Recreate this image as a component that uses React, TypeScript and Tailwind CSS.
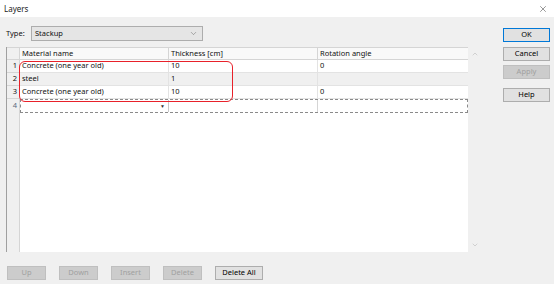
import { ChevronDown, ChevronUp, X } from "lucide-react";

const rows = [
  { n: "1", material: "Concrete (one year old)", thickness: "10", rotation: "0", alt: false },
  { n: "2", material: "steel", thickness: "1", rotation: "", alt: true },
  { n: "3", material: "Concrete (one year old)", thickness: "10", rotation: "0", alt: false },
];

function SideButton({ label, primary, disabled }: { label: string; primary?: boolean; disabled?: boolean }) {
  return (
    <button
      type="button"
      className={
        "h-[14px] w-[47px] border text-[7.5px] leading-none " +
        (disabled
          ? "border-[#bfbfbf] bg-[#cccccc] text-[#a0a0a0]"
          : primary
            ? "border-[#0078d7] bg-[#e1e1e1] text-black"
            : "border-[#adadad] bg-[#e1e1e1] text-black")
      }
    >
      {label}
    </button>
  );
}

function BottomButton({ label, disabled, w = "w-[39px]" }: { label: string; disabled?: boolean; w?: string }) {
  return (
    <button
      type="button"
      className={
        "h-[14px] border text-[7.5px] leading-none " +
        w +
        " " +
        (disabled ? "border-[#bfbfbf] bg-[#cccccc] text-[#a0a0a0]" : "border-[#adadad] bg-[#e1e1e1] text-black")
      }
    >
      {label}
    </button>
  );
}

export default function App() {
  return (
    <div
      className="flex h-[284px] w-[554px] flex-col bg-[#f0f0f0] text-[7.5px] text-[#111]"
      style={{ fontFamily: '"Noto Sans", "Open Sans", sans-serif' }}
    >
      <div className="flex h-[17px] items-center justify-between bg-white pl-[4px] pr-[6px]">
        <span className="text-[8px] text-[#222]">Layers</span>
        <X size={10} strokeWidth={1.2} className="text-[#333]" />
      </div>

      <div className="flex flex-1">
        <div className="flex flex-col pl-[6px]">
          <div className="mt-[9px] flex h-[15px] items-center">
            <span className="w-[25px]">Type:</span>
            <div className="flex h-[15px] w-[172px] items-center justify-between border border-[#adadad] bg-[#e5e5e5] pl-[3px] pr-[4px]">
              <span>Stackup</span>
              <ChevronDown size={9} strokeWidth={1.2} className="text-[#555]" />
            </div>
          </div>

          <div className="relative mt-[6px] flex h-[205px] w-[475px]">
            <div className="flex w-[462px] flex-col border-l border-[#a0a0a0] bg-white">
              <div className="flex h-[13px] border-t border-[#d5d5d5] bg-[#f9f9f9]">
                <div className="w-[13px] border-r border-b border-[#d5d5d5] bg-[#f0f0f0]" />
                <div className="flex w-[149px] items-center border-r border-b border-[#d5d5d5] pl-[2px]">Material name</div>
                <div className="flex w-[149px] items-center border-r border-b border-[#d5d5d5] pl-[2px]">Thickness [cm]</div>
                <div className="flex w-[150px] items-center border-b border-[#d5d5d5] pl-[2px]">Rotation angle</div>
              </div>
              {rows.map((r) => (
                <div key={r.n} className={"flex h-[13px] " + (r.alt ? "bg-[#f0f0f0]" : "bg-white")}>
                  <div className="flex w-[13px] items-center justify-end border-r border-b border-[#d5d5d5] bg-[#f0f0f0] pr-[2px]">{r.n}</div>
                  <div className="flex w-[149px] items-center border-r border-b border-[#e3e3e3] pl-[2px]">{r.material}</div>
                  <div className="flex w-[149px] items-center border-r border-b border-[#e3e3e3] pl-[2px]">{r.thickness}</div>
                  <div className="flex w-[150px] items-center border-b border-[#e3e3e3] pl-[2px]">{r.rotation}</div>
                </div>
              ))}
              <div className="flex h-[14px]">
                <div className="flex w-[13px] items-center justify-end border-r border-[#d5d5d5] bg-[#f0f0f0] pr-[2px] text-[#5a6a80]">4</div>
                <div className="flex flex-1 border border-dashed border-[#8a8a8a]">
                  <div className="flex w-[148px] items-center justify-end border-r border-[#c8c8c8] pr-[3px]">
                    <span className="text-[5px] leading-none text-[#333]">▼</span>
                  </div>
                  <div className="w-[149px] border-r border-[#d5d5d5]" />
                  <div className="flex-1" />
                </div>
              </div>
              <div className="flex flex-1">
                <div className="w-[13px] border-r border-[#d5d5d5] bg-[#f0f0f0]" />
                <div className="flex-1 bg-white" />
              </div>
            </div>
            <div className="flex w-[13px] flex-col items-center justify-between bg-[#f0f0f0] py-[3px]">
              <ChevronUp size={8} strokeWidth={1.5} className="text-[#b0b0b0]" />
              <ChevronDown size={8} strokeWidth={1.5} className="text-[#b0b0b0]" />
            </div>
            <div className="pointer-events-none absolute left-[13px] top-[14px] h-[41px] w-[214px] rounded-[6px] border-[1.5px] border-[#e8212a]" />
          </div>

          <div className="mt-[14px] flex gap-[13px] pl-[1px]">
            <BottomButton label="Up" disabled />
            <BottomButton label="Down" disabled />
            <BottomButton label="Insert" disabled />
            <BottomButton label="Delete" disabled />
            <BottomButton label="Delete All" w="w-[48px]" />
          </div>
        </div>

        <div className="ml-[22px] mt-[11px] flex flex-col">
          <SideButton label="OK" primary />
          <div className="mt-[5px]">
            <SideButton label="Cancel" />
          </div>
          <div className="mt-[4px]">
            <SideButton label="Apply" disabled />
          </div>
          <div className="mt-[9px]">
            <SideButton label="Help" />
          </div>
        </div>
      </div>
    </div>
  );
}
